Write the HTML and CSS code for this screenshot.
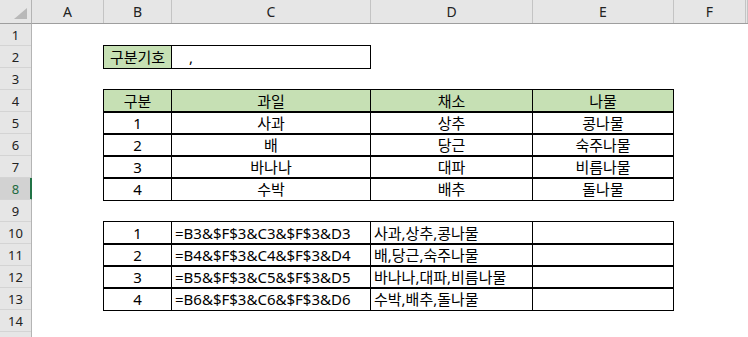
FILE: index.html
```html
<!DOCTYPE html>
<html lang="ko">
<head>
    <meta charset="UTF-8">
    <meta name="viewport" content="width=device-width, initial-scale=1.0">
    <title>구분기호</title>
    <link rel="stylesheet" href="styles.css">
</head>
<body>
    <div class="sheet">
        <div class="corner">
            <svg width="31" height="23" viewBox="0 0 31 23"><polygon points="27,8 27,19 14,19" fill="#b9b9b9"/></svg>
        </div>
        <div class="col_heads">
            <div class="col_head">A</div>
            <div class="col_head">B</div>
            <div class="col_head">C</div>
            <div class="col_head">D</div>
            <div class="col_head">E</div>
            <div class="col_head">F</div>
            <div class="col_head"></div>
        </div>
        <div class="row_heads">
            <div class="row_head">1</div>
            <div class="row_head">2</div>
            <div class="row_head">3</div>
            <div class="row_head">4</div>
            <div class="row_head">5</div>
            <div class="row_head">6</div>
            <div class="row_head">7</div>
            <div class="row_head selected">8</div>
            <div class="row_head">9</div>
            <div class="row_head">10</div>
            <div class="row_head">11</div>
            <div class="row_head">12</div>
            <div class="row_head">13</div>
            <div class="row_head">14</div>
            <div class="row_head"></div>
        </div>
        <div class="cells">
            <div class="row"></div>
            <div class="row">
                <div></div>
                <div class="cell box green">구분기호</div>
                <div class="cell box sep">,</div>
            </div>
            <div class="row"></div>
            <div class="row">
                <div></div>
                <div class="cell box green">구분</div>
                <div class="cell box green">과일</div>
                <div class="cell box green">채소</div>
                <div class="cell box green">나물</div>
            </div>
            <div class="row">
                <div></div>
                <div class="cell box">1</div>
                <div class="cell box">사과</div>
                <div class="cell box">상추</div>
                <div class="cell box">콩나물</div>
            </div>
            <div class="row">
                <div></div>
                <div class="cell box">2</div>
                <div class="cell box">배</div>
                <div class="cell box">당근</div>
                <div class="cell box">숙주나물</div>
            </div>
            <div class="row">
                <div></div>
                <div class="cell box">3</div>
                <div class="cell box">바나나</div>
                <div class="cell box">대파</div>
                <div class="cell box">비름나물</div>
            </div>
            <div class="row">
                <div></div>
                <div class="cell box">4</div>
                <div class="cell box">수박</div>
                <div class="cell box">배추</div>
                <div class="cell box">돌나물</div>
            </div>
            <div class="row"></div>
            <div class="row">
                <div></div>
                <div class="cell box">1</div>
                <div class="cell box left">=B3&amp;$F$3&amp;C3&amp;$F$3&amp;D3</div>
                <div class="cell box left">사과,상추,콩나물</div>
                <div class="cell box"></div>
            </div>
            <div class="row">
                <div></div>
                <div class="cell box">2</div>
                <div class="cell box left">=B4&amp;$F$3&amp;C4&amp;$F$3&amp;D4</div>
                <div class="cell box left">배,당근,숙주나물</div>
                <div class="cell box"></div>
            </div>
            <div class="row">
                <div></div>
                <div class="cell box">3</div>
                <div class="cell box left">=B5&amp;$F$3&amp;C5&amp;$F$3&amp;D5</div>
                <div class="cell box left">바나나,대파,비름나물</div>
                <div class="cell box"></div>
            </div>
            <div class="row">
                <div></div>
                <div class="cell box">4</div>
                <div class="cell box left">=B6&amp;$F$3&amp;C6&amp;$F$3&amp;D6</div>
                <div class="cell box left">수박,배추,돌나물</div>
                <div class="cell box"></div>
            </div>
            <div class="row"></div>
            <div class="row"></div>
        </div>
    </div>
</body>
</html>
```

FILE: styles.css
```css
body {
    margin: 0;
    background: white;
    font-family: "Noto Sans", "Noto Sans CJK KR", sans-serif;
    color: #000;
    overflow: hidden;
}

.sheet {
    display: grid;
    grid-template-columns: 32px 1fr;
    grid-template-rows: 24px 1fr;
    height: 337px;
    overflow: hidden;
}

.corner {
    background: #e6e6e6;
    border-right: 1px solid #b4b4b4;
    border-bottom: 1px solid #9e9e9e;
}

.corner svg {
    display: block;
}

.col_heads {
    display: grid;
    grid-template-columns: 72px 68px 199px 162px 141px 72px 1fr;
    background: #e6e6e6;
    border-bottom: 1px solid #9e9e9e;
}

.col_head {
    border-right: 1px solid #c4c4c4;
    text-align: center;
    font-size: 14px;
    line-height: 23px;
    color: #222;
}

.row_heads {
    background: #e6e6e6;
    border-right: 1px solid #b4b4b4;
}

.row_head {
    height: 21px;
    border-bottom: 1px solid #d4d4d4;
    text-align: center;
    font-size: 13px;
    line-height: 22px;
    color: #222;
}

.row_head.selected {
    background: #d2d2d2;
    color: #1e6b41;
    box-shadow: inset -1px 0 0 #217346;
    margin-right: -1px;
    border-right: 1px solid #217346;
}

.cells {
    display: flex;
    flex-direction: column;
    gap: 1px;
}

.row {
    display: grid;
    grid-template-columns: 71px 67px 198px 161px 140px 71px 1fr;
    column-gap: 1px;
    height: 21px;
}

.cell {
    font-size: 15px;
    line-height: 22px;
    text-align: center;
    white-space: nowrap;
}

.box {
    outline: 1px solid #000;
}

.green {
    background: #c6e0b4;
}

.left {
    text-align: left;
    padding-left: 3px;
}

.sep {
    text-align: left;
    padding-left: 17px;
}
```
